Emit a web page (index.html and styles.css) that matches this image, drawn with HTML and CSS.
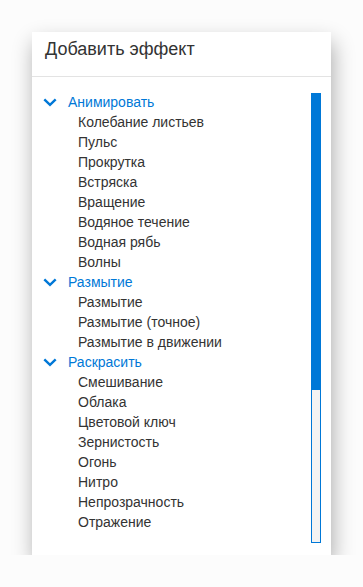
FILE: index.html
```html
<!DOCTYPE html>
<html>
<head>
<meta charset="utf-8">
<link rel="stylesheet" href="styles.css">
</head>
<body>
<div class="panel">
  <div class="header">Добавить эффект</div>
  <div class="body">
    <div class="list">
      <div class="cat"><svg class="chev" width="14" height="9" viewBox="0 0 14 9"><path d="M1.3 1.3 L7 6.8 L12.7 1.3" fill="none" stroke="#0078d7" stroke-width="2.4"/></svg>Анимировать</div>
      <div class="item">Колебание листьев</div>
      <div class="item">Пульс</div>
      <div class="item">Прокрутка</div>
      <div class="item">Встряска</div>
      <div class="item">Вращение</div>
      <div class="item">Водяное течение</div>
      <div class="item">Водная рябь</div>
      <div class="item">Волны</div>
      <div class="cat"><svg class="chev" width="14" height="9" viewBox="0 0 14 9"><path d="M1.3 1.3 L7 6.8 L12.7 1.3" fill="none" stroke="#0078d7" stroke-width="2.4"/></svg>Размытие</div>
      <div class="item">Размытие</div>
      <div class="item">Размытие (точное)</div>
      <div class="item">Размытие в движении</div>
      <div class="cat"><svg class="chev" width="14" height="9" viewBox="0 0 14 9"><path d="M1.3 1.3 L7 6.8 L12.7 1.3" fill="none" stroke="#0078d7" stroke-width="2.4"/></svg>Раскрасить</div>
      <div class="item">Смешивание</div>
      <div class="item">Облака</div>
      <div class="item">Цветовой ключ</div>
      <div class="item">Зернистость</div>
      <div class="item">Огонь</div>
      <div class="item">Нитро</div>
      <div class="item">Непрозрачность</div>
      <div class="item">Отражение</div>
    </div>
    <div class="scrollbar"><div class="thumb"></div></div>
  </div>
</div>
</body>
</html>
```
FILE: styles.css
```css
html, body {
  margin: 0;
  padding: 0;
  background: #fcfcfc;
}
body {
  padding: 32px 0 0 32px;
  font-family: "Liberation Sans", Arial, sans-serif;
}
.panel {
  width: 299px;
  height: 523px;
  background: #fff;
  box-shadow: 2px 10px 20px rgba(0,0,0,0.32);
  display: flex;
  flex-direction: column;
}
.header {
  border-bottom: 1px solid #e3e3e3;
  padding: 6px 0 0 13px;
  box-sizing: border-box;
  height: 45px;
  font-size: 18px;
  color: #333;
  line-height: 22px;
}
.body {
  display: flex;
  padding-top: 15px;
}
.list {
  flex: 1;
  padding-left: 11px;
}
.cat, .item {
  height: 20px;
  line-height: 20px;
  font-size: 14px;
  white-space: nowrap;
}
.cat {
  color: #0078d7;
  display: flex;
  align-items: center;
}
.chev {
  margin: 1px 11px 0 0;
}
.item {
  color: #333;
  padding-left: 35px;
}
.scrollbar {
  width: 10px;
  height: 450px;
  margin: 1px 10px 0 0;
  box-sizing: border-box;
  border: 1px solid #0078d7;
  background: #f3f3f3;
}
.thumb {
  height: 297px;
  margin: -1px;
  background: #0078d7;
}
```
